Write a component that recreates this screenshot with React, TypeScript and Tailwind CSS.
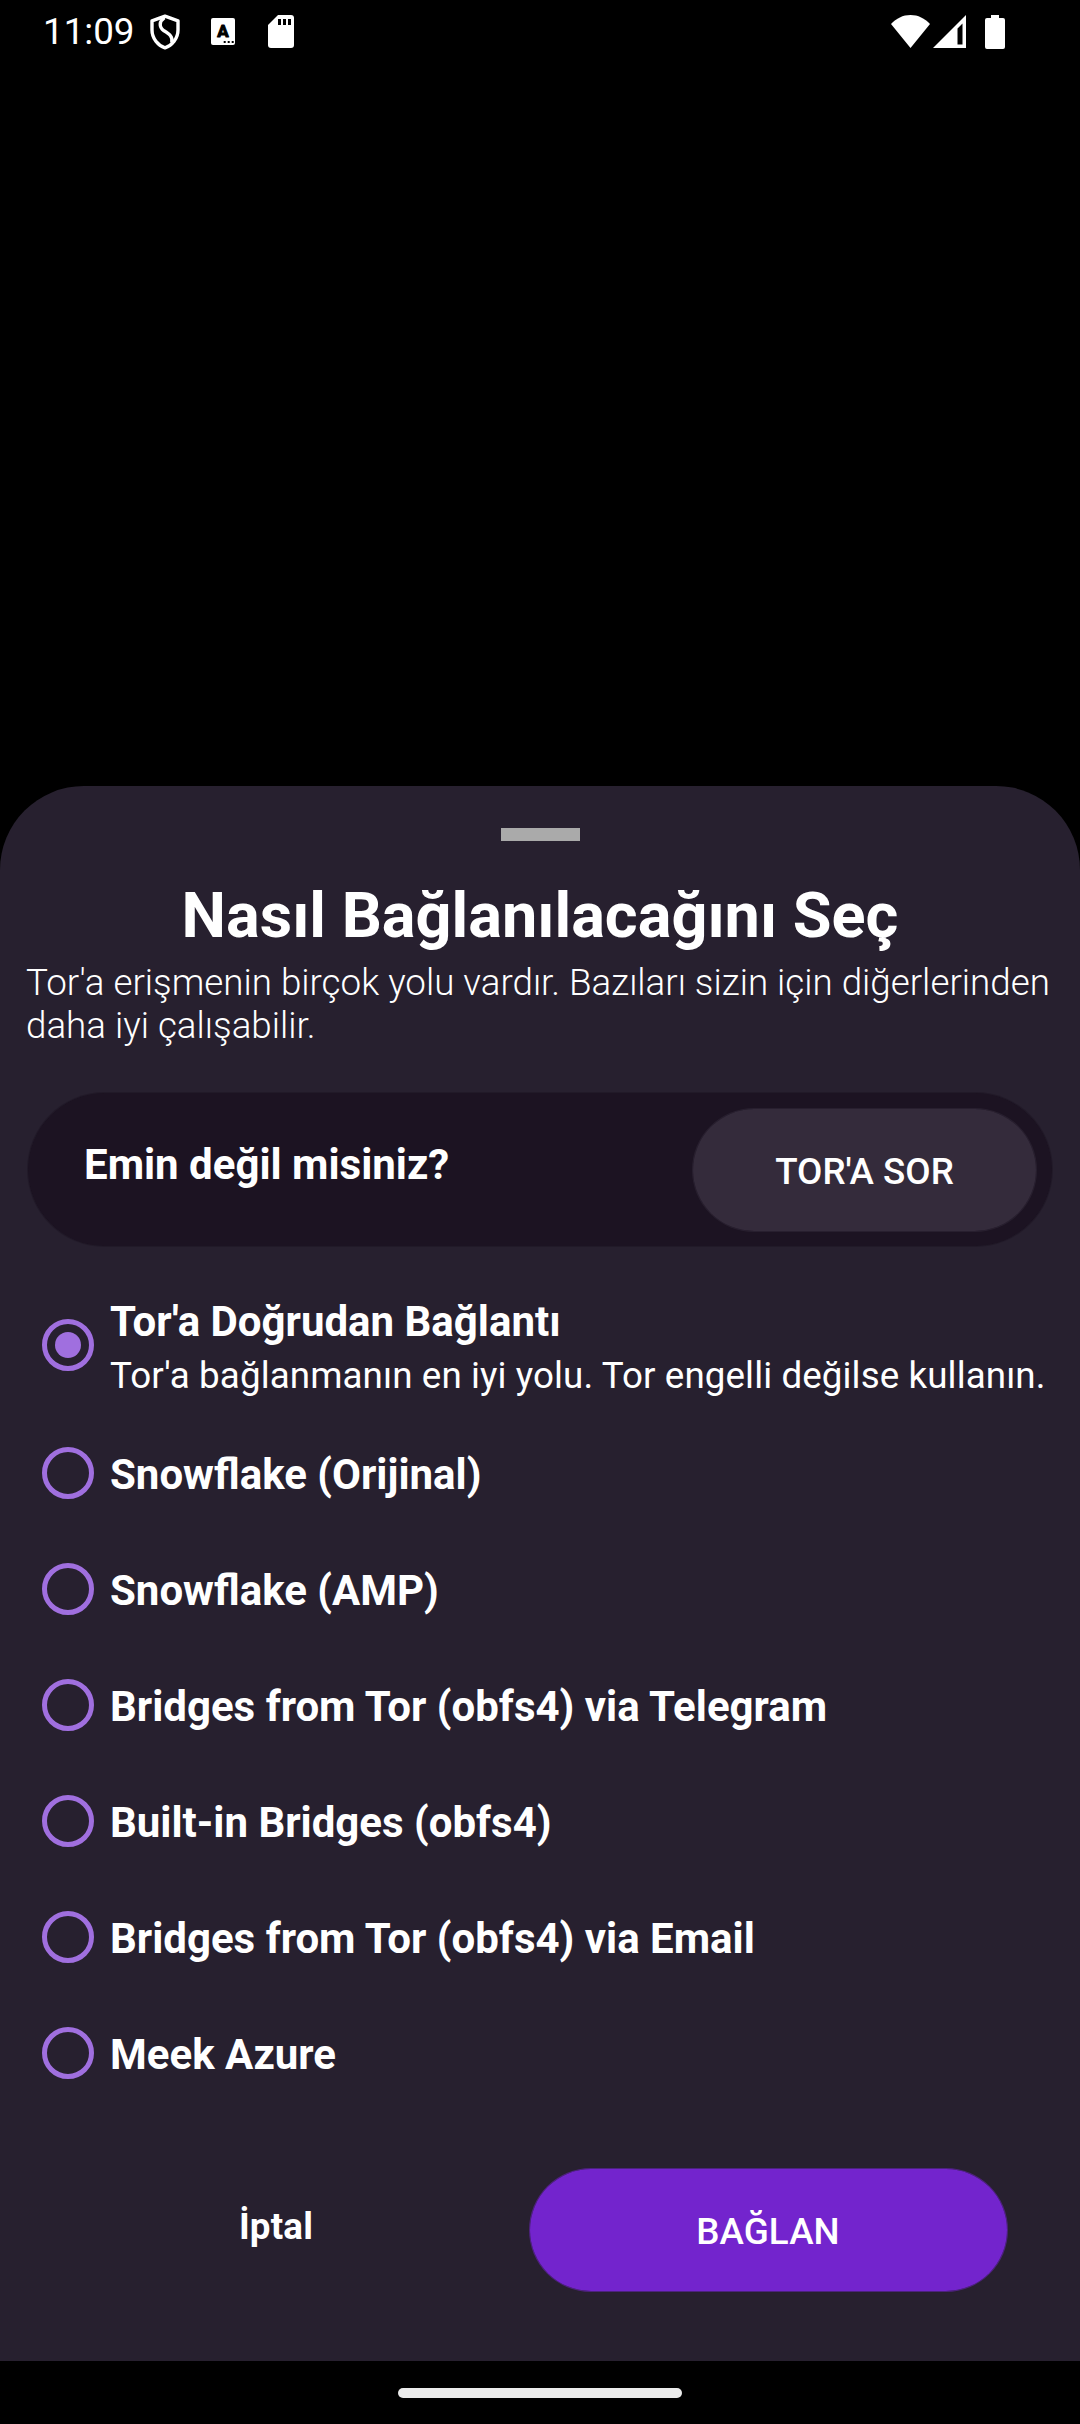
import { useState } from "react";

const options = [
  { label: "Snowflake (Orijinal)" },
  { label: "Snowflake (AMP)" },
  { label: "Bridges from Tor (obfs4) via Telegram" },
  { label: "Built-in Bridges (obfs4)" },
  { label: "Bridges from Tor (obfs4) via Email" },
  { label: "Meek Azure" },
];

function ShieldIcon() {
  return (
    <svg className="ml-3.5 h-9 w-8" viewBox="0 0 32 36" fill="none" stroke="#fff">
      <path
        d="M16 2.2 L3 6.8 V16 C3 24.5 9 31.5 16 33.8 C23 31.5 29 24.5 29 16 V6.8 Z"
        strokeWidth="3.4"
        strokeLinejoin="round"
      />
      <path d="M15.5 3.5 C10.2 7.2 9.6 13.2 15 16.8 C20.6 20.2 24 22.5 22.8 28.6" strokeWidth="3.4" />
    </svg>
  );
}

function LanguageIcon() {
  return (
    <svg className="ml-[30px] h-[27px] w-6" viewBox="0 0 24 27">
      <rect width="24" height="27" rx="2" fill="#fff" />
      <text
        x="12"
        y="19.3"
        textAnchor="middle"
        fontSize="17"
        fontWeight="700"
        fontFamily="Roboto, sans-serif"
        stroke="#000"
        strokeWidth="1"
        strokeLinejoin="round"
      >
        A
      </text>
      <path d="M12.7 23h2v2h-2zM16.7 23h2v2h-2zM20.7 23h2v2h-2z" />
    </svg>
  );
}

function SdCardIcon() {
  return (
    <svg className="ml-[33px] h-[33px] w-[26px]" viewBox="0 0 26 33">
      <path d="M10 0H23a3 3 0 0 1 3 3V30a3 3 0 0 1-3 3H3a3 3 0 0 1-3-3V10Z" fill="#fff" />
      <path d="M10 4h3v6h-3zM15 4h3v6h-3zM20 4h3v6h-3z" />
    </svg>
  );
}

function StatusBar() {
  return (
    <header className="flex h-[63px] items-center pl-[43px]">
      <span className="pb-px text-[36.75px] leading-[43px]">11:09</span>
      <ShieldIcon />
      <LanguageIcon />
      <SdCardIcon />
      <div className="mr-[75px] ml-auto flex items-center">
        <svg className="h-[33px] w-[39px]" viewBox="0 0 39 33">
          <path d="M0 9C5.2 3.400 12 0 19.500 0S33.800 3.400 39 9L19.500 33Z" fill="#fff" />
        </svg>
        <svg className="ml-[3px] h-[33px] w-[33px]" viewBox="0 0 33 33">
          <path d="M33 0V33H0ZM29.500 8.600L24.500 13.500V29.500H29.500Z" fill="#fff" fillRule="evenodd" />
        </svg>
        <svg className="ml-[19px] h-[34px] w-5" viewBox="0 0 20 34">
          <path d="M6 0H14V3H18a2 2 0 0 1 2 2V32a2 2 0 0 1-2 2H2a2 2 0 0 1-2-2V5a2 2 0 0 1 2-2H6Z" fill="#fff" />
        </svg>
      </div>
    </header>
  );
}

function Radio({ checked }: { checked: boolean }) {
  return (
    <span className="flex size-[52px] shrink-0 items-center justify-center rounded-full border-[5px] border-[#a06fdf]">
      {checked && <span className="size-[26px] rounded-full bg-[#a06fdf]" />}
    </span>
  );
}

export default function App() {
  const [selected, setSelected] = useState(0);

  return (
    <div className="flex h-[2424px] w-[1080px] flex-col bg-black font-['Roboto',sans-serif] text-white">
      <StatusBar />

      <main className="mt-[723px] flex h-[1575px] flex-col rounded-t-[84px] bg-[#27202f]">
        <div className="mt-[42px] ml-[501px] h-[13px] w-[79px] bg-[#aaaaaa]" />
        <h1 className="mt-[38px] text-center text-[63px] leading-[74px] font-bold">Nasıl Bağlanılacağını Seç</h1>
        <p className="mt-2 px-[26px] text-[36.75px] leading-[43px] font-light">
          Tor'a erişmenin birçok yolu vardır. Bazıları sizin için diğerlerinden
          <br />
          daha iyi çalışabilir.
        </p>

        <section className="mx-[27px] mt-[45px] flex h-[155px] items-center justify-between rounded-full border border-[#1c1322]/50 bg-[#1c1322] bg-clip-padding pr-[15px] pl-14">
          <span className="pb-2.5 text-[42px] leading-[49px] font-bold">Emin değil misiniz?</span>
          <button className="h-[124px] w-[345px] rounded-full border border-[#342b3b]/50 bg-[#342b3b] bg-clip-padding pt-[3px] text-[36.75px] leading-[43px] font-medium">
            TOR'A SOR
          </button>
        </section>

        <div className="mt-[50px] flex flex-col pl-[42px]">
          <button className="flex h-[100px] items-start text-left" onClick={() => setSelected(0)}>
            <span className="mt-[22px]">
              <Radio checked={selected === 0} />
            </span>
            <span className="ml-4 flex flex-col">
              <span className="text-[42px] leading-[49px] font-bold">Tor'a Doğrudan Bağlantı</span>
              <span className="mt-2 text-[36.75px] leading-[43px] tracking-[0.1px] whitespace-nowrap">
                Tor'a bağlanmanın en iyi yolu. Tor engelli değilse kullanın.
              </span>
            </span>
          </button>
          <div className="mt-[18px] flex flex-col">
            {options.map((option, i) => (
              <button
                key={option.label}
                className="flex h-[116px] items-center text-left"
                onClick={() => setSelected(i + 1)}
              >
                <Radio checked={selected === i + 1} />
                <span className="ml-4 pt-[3px] text-[42px] leading-[49px] font-bold">{option.label}</span>
              </button>
            ))}
          </div>
        </div>

        <footer className="mt-[57px] flex h-[124px] items-center">
          <button className="ml-[26px] w-[503px] pr-[3px] pb-[7px] text-[36.75px] leading-[43px] font-bold tracking-[0.2px]">
            İptal
          </button>
          <button className="h-[124px] w-[479px] rounded-full border border-[#7324cd]/50 bg-[#7324cd] bg-clip-padding pt-[3px] pr-px text-[36.75px] leading-[43px] font-medium tracking-[0.1px]">
            BAĞLAN
          </button>
        </footer>
      </main>

      <div className="mt-[27px] h-2.5 w-[284px] self-center rounded-full bg-[#ebebeb]" />
    </div>
  );
}
